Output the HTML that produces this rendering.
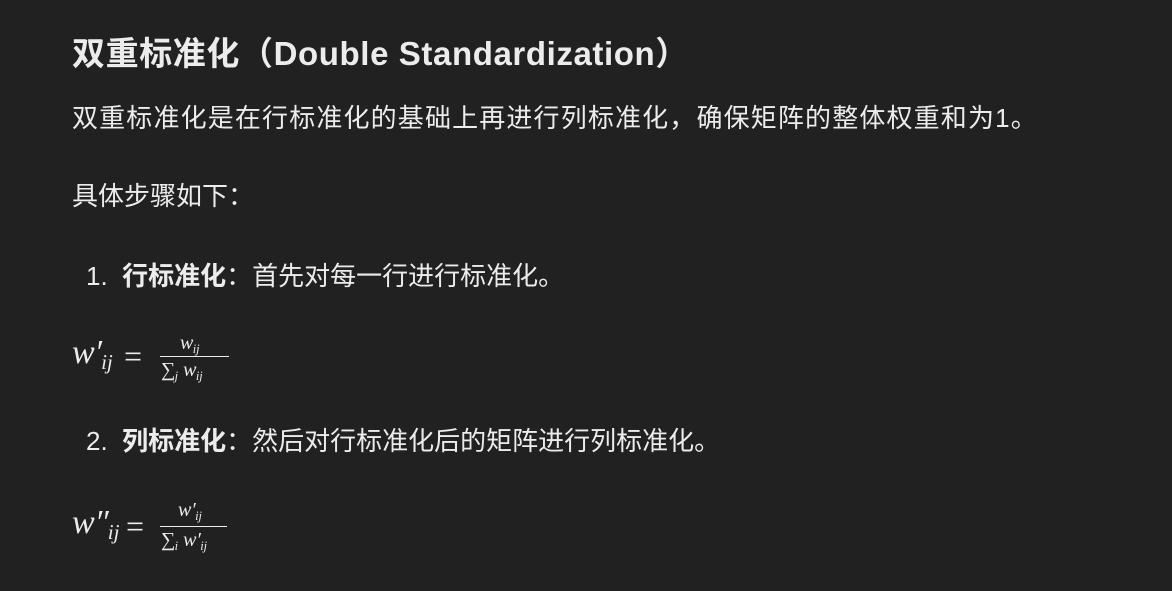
<!DOCTYPE html>
<html><head><meta charset="utf-8"><style>
html,body{margin:0;width:1172px;height:591px;background:#212121;overflow:hidden}
body{color:#ececec;font-family:"Liberation Sans","Noto Sans CJK SC",sans-serif;position:relative}
.t{position:absolute;white-space:nowrap;line-height:1}
.m{font-family:"Liberation Serif","DejaVu Serif",serif;font-style:italic;position:absolute;white-space:nowrap;line-height:1}
.bar{position:absolute;height:1.3px;background:#ececec}
sub{font-size:0.62em;vertical-align:-0.3em;margin-left:-0.05em}
</style></head><body>
<div class="t" style="left:72px;top:37px;font-size:33px;font-weight:bold;letter-spacing:0.6px">双重标准化（Double Standardization）</div>
<div class="t" style="left:72px;top:105px;font-size:26px;letter-spacing:1.15px">双重标准化是在行标准化的基础上再进行列标准化，确保矩阵的整体权重和为1。</div>
<div class="t" style="left:72px;top:183px;font-size:26px">具体步骤如下：</div>
<div class="t" style="left:86px;top:263px;font-size:26px">1.&nbsp; <b>行标准化</b>：首先对每一行进行标准化。</div>
<div class="m" style="left:72px;top:336px;font-size:34px">w′<sub>ij</sub></div>
<div class="m" style="left:124px;top:340px;font-size:32px;font-style:normal">=</div>
<div class="m" style="left:180px;top:333px;font-size:20px">w<sub>ij</sub></div>
<div class="bar" style="left:160px;top:356px;width:69px"></div>
<div class="m" style="left:161px;top:360px;font-size:20px"><span style="font-style:normal">∑</span><sub>j</sub> w<sub>ij</sub></div>
<div class="t" style="left:86px;top:428px;font-size:26px">2.&nbsp; <b>列标准化</b>：然后对行标准化后的矩阵进行列标准化。</div>
<div class="m" style="left:72px;top:506px;font-size:34px">w″<sub>ij</sub></div>
<div class="m" style="left:126px;top:510px;font-size:32px;font-style:normal">=</div>
<div class="m" style="left:178px;top:500px;font-size:20px">w′<sub>ij</sub></div>
<div class="bar" style="left:160px;top:526px;width:67px"></div>
<div class="m" style="left:161px;top:530px;font-size:20px"><span style="font-style:normal">∑</span><sub>i</sub> w′<sub>ij</sub></div>
</body></html>
